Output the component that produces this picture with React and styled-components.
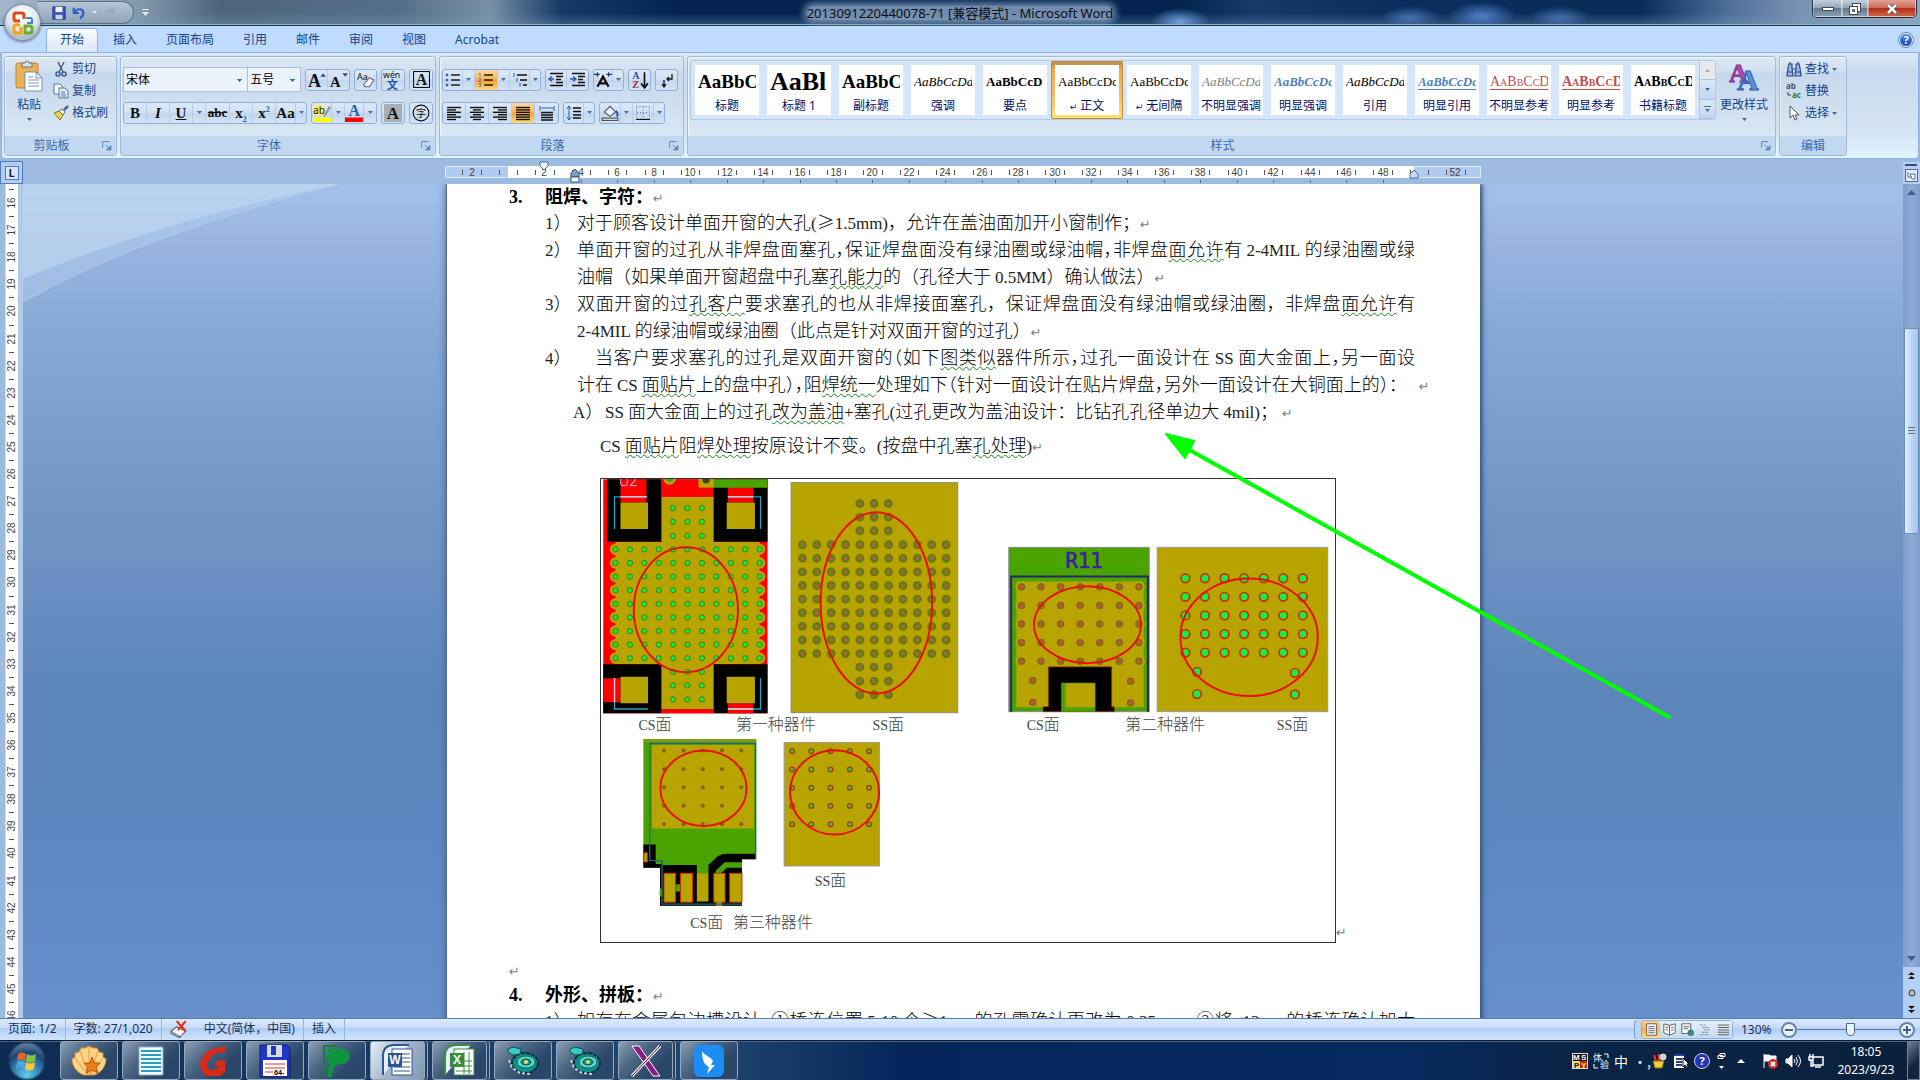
import React from 'react';
import styled, { createGlobalStyle, css } from 'styled-components';

const UI_FONT = `"Noto Sans", "Noto Sans CJK SC", sans-serif`;

const GlobalStyle = createGlobalStyle`
  * { box-sizing: border-box; }
  html, body, #root { height: 100%; }
  body {
    margin: 0;
    overflow: hidden;
    font: 12px/16px ${UI_FONT};
    color: #15428b;
  }
  button, select, input {
    font: inherit;
    color: inherit;
    margin: 0;
    padding: 0;
    border: 0;
    background: none;
  }
  svg { display: block; flex: none; }
`;

const Window = styled.div`
  display: flex;
  flex-direction: column;
  height: 100vh;
  background: #9dbbe2;
`;

/* ---------- title bar ---------- */

const TitleBar = styled.header`
  display: grid;
  grid-template-columns: 1fr auto 1fr;
  height: 26px;
  flex: none;
  border-bottom: 1px solid #1d3b52;
  box-shadow: inset 0 -1px #8fb4c0;
  background:
    radial-gradient(ellipse 30px 14px at 1180px 22px, #6f9fdc, transparent),
    radial-gradient(ellipse 30px 12px at 1410px 18px, #4672ae, transparent),
    radial-gradient(ellipse 34px 14px at 1482px 16px, #4f80c8, transparent),
    radial-gradient(ellipse 30px 12px at 1560px 18px, #4672ae, transparent),
    linear-gradient(transparent 50%, rgba(120, 160, 190, 0.35)),
    linear-gradient(90deg, #a3b6cb 0, #8298ad 140px, #4d647c 220px, #566f88 400px, #7890a5 490px, #163a66 560px, #03234e 680px, #03234e 1180px, #16386a 1250px, #0a2d5c 1400px, #0a2b58 1640px, #4f7099 1730px, #7893b3 1800px, #8fa6bf 100%);
`;

const TitleLeft = styled.div`
  display: flex;
  align-items: center;
  gap: 8px;
`;

const QuickAccess = styled.div`
  display: flex;
  align-items: center;
  gap: 6px;
  width: 96px;
  height: 23px;
  margin-left: 38px;
  padding-left: 14px;
  border: 1px solid #5d7287;
  border-left: 0;
  border-radius: 0 12px 12px 0;
  background: linear-gradient(#b6c5d6, #8ea3b9);
`;

const QuickButton = styled.button`
  display: flex;
  align-items: center;
`;

const OfficeButton = styled.button`
  position: absolute;
  left: 4px;
  top: 4px;
  width: 37px;
  height: 37px;
  border-radius: 50%;
  border: 1px solid #7d90a8;
  background: radial-gradient(circle at 50% 30%, #fff, #dfe6ee 50%, #a9b8ca 75%, #f4f8fc);
  box-shadow: 0 1px 3px rgba(0, 0, 0, 0.5);
  display: grid;
  place-items: center;
`;

const WindowTitle = styled.h1`
  margin: 0;
  align-self: center;
  font: 13px/14px ${UI_FONT};
  color: #0a0f16;
  background: rgba(150, 175, 205, 0.75);
  border-radius: 6px;
  box-shadow: 0 0 7px 3px rgba(150, 175, 205, 0.75);
`;

const WindowButtons = styled.div`
  display: flex;
  justify-self: end;
  height: 18px;
  margin-right: 3px;
  border: 1px solid #1f2f42;
  border-top: 0;
  border-radius: 0 0 5px 5px;
  overflow: hidden;
`;

const WindowButton = styled.button`
  width: ${p => p.$width}px;
  display: grid;
  place-items: center;
  box-shadow: inset -1px -1px rgba(255, 255, 255, 0.55), inset 1px 0 rgba(255, 255, 255, 0.35);
  background: ${p => (p.$close
    ? 'linear-gradient(#e0a397, #cd6a56 45%, #b2301a 50%, #cf6a4c)'
    : 'linear-gradient(#c5d0dc, #93a5b8 45%, #65798f 50%, #8da0b4)')};
`;

/* ---------- ribbon ---------- */

const TabStrip = styled.nav`
  display: flex;
  align-items: flex-end;
  gap: 1px;
  flex: none;
  height: 26px;
  padding: 0 7px 0 46px;
  background: #bfdbff;
`;

const Tab = styled.button`
  height: 24px;
  padding: 0 13px 2px;
  border: 1px solid transparent;
  border-bottom: 0;
  border-radius: 4px 4px 0 0;
  white-space: nowrap;
  ${p => p.$active && css`
    border-color: #8db2e3;
    background: linear-gradient(#fff, #e6eff9 60%, #dbe6f4);
  `}
`;

const HelpButton = styled.button`
  margin: 0 0 5px auto;
  width: 14px;
  height: 14px;
  border-radius: 50%;
  border: 1px solid #fff;
  outline: 1px solid #5b84c4;
  background: linear-gradient(#4e8ee8, #1546b4);
  color: #fff;
  font: bold 11px/12px "Noto Sans", sans-serif;
`;

const RibbonPanel = styled.section`
  display: flex;
  gap: 3px;
  flex: none;
  height: 107px;
  margin: 0 1px;
  padding: 3px 2px 2px;
  border: 1px solid #8db2e3;
  border-radius: 0 0 4px 4px;
  background: linear-gradient(#dbe7f5, #cddef0 16px, #c8daee 17px, #d5e4f4 80px, #e1f5ff);
`;

const Group = styled.section`
  display: flex;
  flex-direction: column;
  width: ${p => p.$width}px;
  flex: none;
  border: 1px solid #9ebbdd;
  border-radius: 3px;
  box-shadow: inset 1px 1px rgba(255, 255, 255, 0.6);
  background: linear-gradient(#dee8f5, #d1dff0 15px, #c7d8ed 16px, #d8e7f3 80px);
`;

const GroupBody = styled.div`
  flex: 1;
  display: flex;
  padding: ${p => p.$pad || '2px 3px'};
  gap: ${p => p.$gap || 0}px;
  flex-direction: ${p => (p.$column ? 'column' : 'row')};
`;

const GroupFooter = styled.footer`
  height: 19px;
  display: flex;
  align-items: center;
  text-align: center;
  color: #3e6aaa;
  background: #c1d8f0;
  border-radius: 0 0 3px 3px;
`;

const GroupTitle = styled.span`
  flex: 1;
`;

const Launcher = styled.button`
  display: flex;
  justify-content: center;
  width: 18px;
`;

const BigButton = styled.button`
  display: flex;
  flex-direction: column;
  align-items: center;
  gap: 5px;
  width: ${p => p.$width}px;
  padding-top: 2px;
  white-space: nowrap;
`;

const SmallColumn = styled.div`
  display: flex;
  flex-direction: column;
`;

const SmallButton = styled.button`
  display: flex;
  align-items: center;
  gap: 3px;
  height: 22px;
  white-space: nowrap;
`;

const ToolRow = styled.div`
  display: flex;
  gap: 4px;
  height: 23px;
  align-items: center;
`;

const Cluster = styled.div`
  display: flex;
  height: 22px;
  border: 1px solid #8fb0dc;
  border-radius: 3px;
  background: linear-gradient(#dde9f7, #cfdff2 50%, #c2d6ee 51%, #d3e3f5);
`;

const Tool = styled.button`
  width: ${p => p.$width || 23}px;
  height: 20px;
  display: flex;
  align-items: center;
  justify-content: center;
  color: #111;
  border-right: 1px solid #b5cdea;
  &:last-child { border-right: 0; }
  ${p => p.$active && css`background: linear-gradient(#fdd8a4, #fbb75c 45%, #fa9f2e 50%, #fedd7c);`}
`;

const Glyph = styled.span`
  font: ${p => p.$weight || 'bold'} ${p => p.$size || 15}px/18px "Liberation Serif", serif;
  color: #111;
  text-decoration: ${p => p.$line || 'none'};
  sup, sub { font-size: 8px; line-height: 0; color: #2a5bbd; }
`;

const Combo = styled.select`
  appearance: none;
  height: 25px;
  width: ${p => p.$width}px;
  padding: 0 2px;
  border: 1px solid #abc1de;
  border-radius: 0;
  color: #000;
  background:
    linear-gradient(#4a6fa5, #4a6fa5) right 5px top 11px / 5px 1px no-repeat,
    linear-gradient(#4a6fa5, #4a6fa5) right 6px top 12px / 3px 1px no-repeat,
    linear-gradient(#4a6fa5, #4a6fa5) right 7px top 13px / 1px 1px no-repeat,
    #eaf2fb;
  & + & { margin-left: -5px; }
`;

const Gallery = styled.div`
  display: flex;
  height: 60px;
  border: 1px solid #b0cbeb;
  border-radius: 3px;
  background: #d4e6f8;
  overflow: hidden;
`;

const StyleTile = styled.button`
  display: flex;
  flex-direction: column;
  width: 72px;
  height: 58px;
  padding: 4px;
  flex: none;
  border-radius: 2px;
  ${p => p.$active && css`
    background: linear-gradient(#b78a4c, #f5a742 15%, #f8bd62 60%, #ffe46e);
    outline: 1px solid #c08a40;
    outline-offset: -1px;
  `}
`;

const TileFace = styled.span`
  display: flex;
  flex-direction: column;
  flex: 1;
  width: 100%;
  padding: 0 3px;
  background: #fff;
  overflow: hidden;
`;

const Preview = styled.span`
  height: 33px;
  text-align: left;
  white-space: nowrap;
  overflow: hidden;
  color: ${p => p.$color || '#000'};
  font: ${p => p.$font} "Liberation Serif", serif;
  line-height: 34px;
  text-decoration: ${p => (p.$line ? 'underline' : 'none')};
  text-underline-offset: 3px;
  font-variant: ${p => (p.$caps ? 'small-caps' : 'normal')};
`;

const TileName = styled.span`
  color: #00106a;
  text-align: center;
  white-space: nowrap;
  margin: 0 -3px;
`;

const TileMark = styled.small`
  font: 9px/12px "DejaVu Sans", sans-serif;
  margin-right: 3px;
`;

const GalleryScroll = styled.div`
  display: flex;
  flex-direction: column;
  width: 16px;
  border-left: 1px solid #a9c3e4;
`;

const ScrollStep = styled.button`
  flex: 1;
  display: grid;
  place-items: center;
  background: ${p => (p.$off ? '#e6e8ea' : 'linear-gradient(#dbe8f7, #c2d6ee)')};
  border-bottom: 1px solid #a9c3e4;
`;

/* ---------- rulers ---------- */

const RulerRow = styled.div`
  display: grid;
  grid-template-columns: 23px 1fr 17px;
  flex: none;
  height: 25px;
  justify-items: center;
  align-items: end;
  background: #9dbbe1;
`;

const TabStop = styled.button`
  width: 23px;
  height: 23px;
  border: 1px solid #4f7bc4;
  background: #b4cdec;
  display: grid;
  place-items: center;
  span {
    width: 14px;
    height: 14px;
    border: 1px solid #4f7bc4;
    background: #d7e6f8;
    font: bold 11px/12px "Noto Sans", sans-serif;
    color: #223;
  }
`;

const WorkArea = styled.main`
  flex: 1;
  min-height: 0;
  display: grid;
  grid-template-columns: 23px 1fr 17px;
`;

const SideRuler = styled.aside`
  overflow: hidden;
  background: linear-gradient(90deg, #9dbbe1 5px, #c9dbf2 5px 6px, #fff 6px 18px, #b2c9e8 18px);
`;

const Canvas = styled.div`
  position: relative;
  overflow: hidden;
  background: linear-gradient(#a1c1ea, #98b5e0 60px, #85a7d4 160px, #7499c8 300px, #6b91c2 390px, #5c85ba 510px, #5d87c0 640px, #668fcc);
`;

const Swoosh = styled.svg`
  position: absolute;
  left: 0;
  top: 0;
`;

const Scrollbar = styled.aside`
  display: flex;
  flex-direction: column;
  align-items: center;
  background: linear-gradient(90deg, #7d9dca, #8eabd4 50%, #7d9dca);
`;

const ScrollButton = styled.button`
  width: 17px;
  height: ${p => p.$height || 17}px;
  display: grid;
  place-items: center;
  background: ${p => (p.$light ? '#b5cff2' : 'none')};
`;

const ScrollTrack = styled.div`
  flex: 1;
  width: 100%;
  padding: 127px 1px 0;
`;

const ScrollThumb = styled.div`
  height: 206px;
  border: 1px solid #6c8dbd;
  border-radius: 2px;
  background: linear-gradient(90deg, #e4effc, #bed5f3 50%, #a9c5ea);
  display: grid;
  place-items: center;
`;

/* ---------- document ---------- */

const Page = styled.article`
  position: relative;
  width: 1034px;
  min-height: 100%;
  margin: 0 auto;
  padding: 0 65px 0 62px;
  background: #fff;
  border-left: 1px solid #55698a;
  box-shadow: 2px 0 4px #3a5580, 0 0 8px #4d6c9c;
  color: #000;
  font: 18px/27px "Noto Sans CJK SC", sans-serif;
  font-weight: 300;
  white-space: nowrap;
`;

const Heading = styled.h2`
  display: flex;
  align-items: baseline;
  height: 24px;
  margin: 0;
  font: bold 18px/22px "Noto Sans CJK SC", sans-serif;
`;

const HeadingNumber = styled.span`
  width: 36px;
  font-family: "Liberation Serif", serif;
`;

const List = styled.ol`
  list-style: none;
  margin: 0;
  padding: 0 0 0 36px;
`;

const Item = styled.li`
  display: grid;
  grid-template-columns: 32px minmax(0, 1fr);
  margin-left: ${p => p.$indent || 0}px;
`;

const Line = styled.div`
  height: 27px;
  padding-left: ${p => p.$indent || 0}px;
  text-align-last: ${p => (p.$full ? 'justify' : 'left')};
  font-feature-settings: ${p => (p.$tight ? '"halt"' : 'normal')};
`;

const Loose = styled.span`
  font-feature-settings: normal;
`;

const Latin = styled.span`
  font: 17px/20px "Liberation Serif", serif;
  color: #222;
  margin: 0 ${p => (p.$gap ? 4 : 0)}px;
`;

const Flag = styled.span`
  text-decoration: underline wavy #178a17 1px;
  text-underline-offset: 2px;
`;

const Closing = styled.p`
  margin: 7px 0 20px;
  padding-left: 91px;
`;

const Mark = styled.span`
  color: #808080;
  font: 13px/20px "DejaVu Sans", sans-serif;
  margin-left: ${p => p.$gap || 0}px;
`;

const Figure = styled.figure`
  display: flex;
  align-items: flex-end;
  margin: 0 -40px 0 91px;
  svg { border: 1px solid #333; }
`;

const EmptyParagraph = styled.p`
  margin: 12px 0 0;
  height: 27px;
`;

const Arrow = styled.svg`
  position: absolute;
  left: 715px;
  top: 246px;
`;

/* ---------- status bar ---------- */

const StatusBar = styled.footer`
  display: flex;
  flex: none;
  height: 22px;
  border-top: 1px solid #567db1;
  background: linear-gradient(#dceafc, #c7dcf8 40%, #b0cdf5 45%, #d2e4fb);
  color: #15305e;
`;

const StatusItem = styled.button`
  display: flex;
  align-items: center;
  gap: ${p => p.$gap || 16}px;
  padding: 0 8px 2px;
  border-right: 1px solid #92b4de;
  white-space: nowrap;
`;

const ViewButtons = styled.div`
  display: flex;
  margin: 1px 8px 1px auto;
  border: 1px solid #8fb0dc;
  border-radius: 3px;
  box-shadow: -6px 0 #bcd4f5, -7px 0 #7b9dca;
`;

const ViewButton = styled.button`
  width: 18px;
  display: grid;
  place-items: center;
  background: ${p => (p.$active ? 'linear-gradient(#fdd08f, #fbb04d 50%, #fee08a)' : 'linear-gradient(#e4effc, #c5daf4)')};
`;

const Zoom = styled.div`
  display: flex;
  align-items: center;
  padding-right: 5px;
  output { width: 40px; }
`;

const RoundButton = styled.button`
  width: 16px;
  height: 16px;
  display: grid;
  place-items: center;
  border: 2px solid #6884ac;
  border-radius: 50%;
  background: #e9f1fb;
`;

const ZoomSlider = styled.input`
  appearance: none;
  width: 102px;
  height: 16px;
  background: linear-gradient(#5f7ea9, #5f7ea9) center / 100% 1px no-repeat;
  &::-webkit-slider-thumb {
    appearance: none;
    width: 9px;
    height: 13px;
    border: 1px solid #4a658f;
    border-radius: 1px 1px 5px 5px;
    background: #eef4fb;
  }
`;

/* ---------- taskbar ---------- */

const Taskbar = styled.footer`
  display: flex;
  flex: none;
  height: 40px;
  gap: 4px;
  padding-left: 8px;
  border-top: 1px solid #0b1a30;
  box-shadow: inset 0 1px #46648c;
  background: linear-gradient(90deg, #0d2b50, #21476f 700px, #06265a 900px, #062a5e 1400px, #0a2547 1560px, #0a203c);
`;

const StartButton = styled.button`
  width: 38px;
  height: 38px;
  margin: 1px 10px 0 0;
  border-radius: 50%;
  display: grid;
  place-items: center;
  background: radial-gradient(circle at 50% 90%, #5fd0f0, #2a6ca4 45%, #1d4573 60%, #8fb3cf);
  box-shadow: inset 0 0 2px 1px #0d2540;
`;

const TaskButton = styled.button`
  width: 58px;
  height: 39px;
  display: grid;
  place-items: center;
  border: 1px solid #93a9c2;
  border-radius: 3px;
  background: ${p => (p.$active
    ? 'linear-gradient(120deg, #e8eef5, #a5b7cc 45%, #8098b5)'
    : 'linear-gradient(135deg, #8c9fb6, #4d6784 35%, #2a4668 70%)')};
  ${p => p.$stack && css`
    width: 55px;
    margin-right: 3px;
    box-shadow: 2px 0 #28415f, 3px 0 #93a9c2;
  `}
`;

const Tray = styled.div`
  display: flex;
  align-items: center;
  gap: 5px;
  margin-left: auto;
  color: #fff;
  button { display: flex; }
`;

const ImeButton = styled.button`
  width: ${p => p.$width}px;
  margin-right: ${p => p.$after || 0}px;
  justify-content: center;
  font: 14px/16px "Noto Sans CJK SC", sans-serif;
`;

const HelpTray = styled.button`
  width: 16px;
  height: 16px;
  justify-content: center;
  border: 1px solid #c9d4f2;
  border-radius: 50%;
  background: #2036b4;
  color: #fff;
  font: bold 11px/14px "Noto Sans", sans-serif;
`;

const ExpandTray = styled.button`
  margin-right: 8px;
`;

const Clock = styled.time`
  width: 72px;
  text-align: center;
  font: 12px/18px ${UI_FONT};
`;

const ShowDesktop = styled.button`
  width: 13px;
  height: 39px;
  border: 1px solid #6a7f9a;
  background: linear-gradient(135deg, #6b7f98, #14243c 60%);
`;

/* ---------- icons ---------- */

const Caret = ({ color = '#4a6a9a' }) => (
  <svg width="5" height="3"><path d="M0 0h5L2.5 3z" fill={color} /></svg>
);

const CaretTool = () => <Tool $width={13}><Caret /></Tool>;

const Svg = ({ s = 16, children, ...rest }) => (
  <svg width={s} height={s} viewBox="0 0 16 16" fill="none" stroke="#111" {...rest}>{children}</svg>
);

const SizeIcon = ({ size, down }) => (
  <Svg s={18} stroke="none">
    <text x="0" y="14" fontSize={size} fontWeight="bold" fill="#111" fontFamily="Liberation Serif">A</text>
    <path d={down ? 'M11 2h5l-2.500 3z' : 'M11 5h5l-2.500-3z'} fill="#2a4f9a" />
  </Svg>
);

const Bars = ({ widths, align = 0, x = 1 }) => (
  <Svg>
    {widths.map((w, i) => (
      <path key={i} d={`M${x + (14 - w) * align} ${2.5 + i * 2.4}h${w}`} strokeWidth="1.4" />
    ))}
  </Svg>
);

const BulletIcon = ({ numbered }) => (
  <Svg>
    {[3, 8, 13].map((y, i) => (
      <g key={y}>
        <path d={`M6 ${y}h9`} strokeWidth="1.4" />
        {numbered
          ? <text x="0" y={y + 2} fontSize="6" fill="#234f9e" stroke="none" fontFamily="Noto Sans">{i + 1}</text>
          : <circle cx="2" cy={y} r="1" fill="#2a5bbd" stroke="#2a5bbd" />}
      </g>
    ))}
  </Svg>
);

const LevelsIcon = () => (
  <Svg>
    <path d="M5 3h10M8 8h7M11 13h4" strokeWidth="1.4" />
    <path d="M2 1v4M5 6v4M8 11v4" stroke="#2a5bbd" />
  </Svg>
);

const IndentIcon = ({ right }) => (
  <Svg>
    <path d="M2 1.500h13M8 4.500h7M8 7.500h5M8 10.500h7M2 13.500h13" strokeWidth="1.500" />
    <path d={right ? 'M0 7h5M3 4.500l3 2.500-3 2.500' : 'M1 7h5M4 4.500L1 7l3 2.500'} stroke="#2a5bbd" strokeWidth="1.500" />
  </Svg>
);

const LauncherIcon = () => (
  <Svg s={10} stroke="#5f84b8" strokeWidth="1.600">
    <path d="M1 11V1h11M6 6l6 6M14 7v7H7" />
    <path d="M14 14l-6 0 6-6z" fill="#5f84b8" />
  </Svg>
);

const SaveIcon = () => (
  <Svg s={14} stroke="#1d2e86">
    <rect x="1" y="1" width="14" height="14" fill="#3b50bd" />
    <rect x="4" y="1" width="8" height="6" fill="#eef2fa" stroke="none" />
    <rect x="4" y="10" width="8" height="5" fill="#cbd5ee" stroke="none" />
  </Svg>
);

const UndoIcon = () => (
  <Svg s={14} stroke="#2d5fc4" strokeWidth="2.500">
    <path d="M2 2v6h6M3 7c3-5 10-4 10 1 0 3-2 5-4 6" />
  </Svg>
);

const RedoIcon = () => (
  <Svg s={14} stroke="#98a9bb" strokeWidth="2">
    <path d="M12 2v5H7M11 5C7 3 3 6 3 10s6 6 9 2" />
  </Svg>
);

const CustomizeIcon = () => (
  <svg width="7" height="7"><path d="M0 0h7v1H0zM0 3h7L3.500 7z" fill="#e4ebf3" /></svg>
);

const OfficeLogo = () => (
  <svg width="24" height="26" viewBox="0 0 24 26" fill="none" strokeWidth="3">
    <path d="M9 11H5a2 2 0 0 1-2-2V5a2 2 0 0 1 2-2h6a2 2 0 0 1 2 2v4" stroke="#dc4a12" />
    <path d="M15 8h4a2 2 0 0 1 2 2v3h-5" stroke="#3f86d2" strokeWidth="2" />
    <path d="M9 15H5a2 2 0 0 0-2 2v4a2 2 0 0 0 2 2h5v-6" stroke="#f5a50c" />
    <path d="M14 23h5a2 2 0 0 0 2-2v-3a2 2 0 0 0-2-2h-5z" stroke="#6fae2c" />
  </svg>
);

const PasteIcon = () => (
  <svg width="28" height="32" viewBox="0 0 28 32">
    <rect x="1" y="3" width="22" height="25" rx="2" fill="#e9b254" stroke="#b98530" />
    <path d="M7 5V3h3a2 2 0 0 1 4 0h3v4H7z" fill="#d9dde4" stroke="#6a7484" />
    <path d="M10 12h11l6 6v13H10z" fill="#fff" stroke="#6d8dbb" />
    <path d="M21 12v6h6M13 17h5M13 20h11M13 23h11M13 26h11" fill="none" stroke="#7b98c4" />
  </svg>
);

const CutIcon = () => (
  <Svg stroke="#3a5f9f">
    <path d="M5 1l5 10M11 1L6 11" stroke="#55657c" strokeWidth="1.600" />
    <circle cx="5" cy="13" r="2" strokeWidth="1.600" />
    <circle cx="11" cy="13" r="2" strokeWidth="1.600" />
  </Svg>
);

const CopyIcon = () => (
  <Svg stroke="#4a72ad">
    <path d="M1 1h6l3 3v7H1z" fill="#fff" />
    <path d="M6 5h6l3 3v7H6z" fill="#e8f0fb" />
    <path d="M8 9h4M8 11h5M8 13h5" />
  </Svg>
);

const BrushIcon = () => (
  <Svg stroke="#8b7420">
    <path d="M1 8l5-2 4 4-3 5z" fill="#f0d348" />
    <path d="M6 6l3-2 3 3-2 3z" fill="#fff" stroke="#666" />
    <path d="M11 5l4-4" stroke="#49639a" strokeWidth="2.500" />
  </Svg>
);

const FindIcon = () => (
  <Svg stroke="#244a86" strokeWidth="1.200">
    <path d="M3 3h3v4l1 8H1l1-8zM10 3h3l1 4 1 8H9l1-8z" fill="#9cb9e4" />
    <path d="M4 1v2M12 1v2M6 8h4M1 11h6M9 11h6" />
  </Svg>
);

const ReplaceIcon = () => (
  <Svg stroke="none" fontSize="8" fontWeight="bold" fontFamily="Noto Sans">
    <text x="0" y="6" fill="#555">ab</text>
    <text x="6" y="15" fill="#2b7b3c">ac</text>
    <path d="M2 9v3h3" fill="none" stroke="#333" />
  </Svg>
);

const SelectIcon = () => (
  <Svg stroke="#555"><path d="M4 1v12l3-3 2 5 2-1-2-4h4z" fill="#fff" /></Svg>
);

const ChangeStylesIcon = () => (
  <svg width="30" height="30" viewBox="0 0 30 30" fontFamily="Liberation Serif" fontWeight="bold">
    <text x="0" y="20" fontSize="26" fill="#b34fb5" stroke="#83318a">A</text>
    <text x="8" y="28" fontSize="30" fill="#5b93de" stroke="#2f62ae">A</text>
  </svg>
);

/* ---------- rulers drawings ---------- */

const UNIT = 18.22;

const TopRuler = () => {
  const labels = [-2, ...Array.from({ length: 24 }, (_, i) => i * 2 + 2), 52];
  const at = n => 63 + n * UNIT;
  const halves = [-2.5, -1.5, -0.5, 0.5, 50.5, 51.5, 52.5];
  for (let n = 1.5; n < 50; n += 1) halves.push(n);
  return (
    <svg width="1036" height="24" fontFamily="Liberation Sans" fontSize="10" textAnchor="middle" fill="#444">
      <rect x="0.500" y="6.500" width="1035" height="11" fill="#b0cbef" stroke="#dce9f8" />
      <rect x="63" y="6" width="906" height="12" fill="#fff" />
      {halves.map(n => <path key={n} d={`M${Math.round(at(n)) + 0.5} 10v5`} stroke="#555" />)}
      {labels.map(n => (
        <g key={n}>
          <text x={Math.round(at(n))} y="16">{Math.abs(n)}</text>
          {n > 3 && n < 50 && <path d={`M${Math.round(at(n)) + 0.5} 20v3`} stroke="#5a7398" />}
        </g>
      ))}
      <path d="M95 2h8v4l-4 4-4-4z" fill="#e8f0fa" stroke="#4e6c98" />
      <path d="M126 17v-4l4-4 4 4v4z" fill="#7f9fc8" stroke="#35577f" />
      <rect x="126" y="17" width="8" height="5" fill="#fff" stroke="#35577f" />
      <path d="M965 18v-4l4-4 4 4v4z" fill="#c8dbf2" stroke="#4e6c98" />
    </svg>
  );
};

const LeftRuler = () => (
  <svg width="23" height="100%" fontFamily="Liberation Sans" fontSize="10" textAnchor="middle" fill="#444">
    {Array.from({ length: 60 }, (_, i) => {
      const y = Math.round(19 + i * 27.1);
      return (
        <g key={i}>
          <text transform={`translate(15 ${y}) rotate(-90)`}>{16 + i}</text>
          <path d={`M9 ${y - 13.5}h5`} stroke="#555" />
        </g>
      );
    })}
  </svg>
);

/* ---------- board drawings, in units of a third of a pixel ---------- */

const GOLD = '#b8a400';
const GREEN = '#4aa400';
const RED = '#e81000';

const grid = (cols, rows) => rows.flatMap(y => cols.map(x => [x, y]));
const steps = (start, step, count) => Array.from({ length: count }, (_, i) => start + step * i);

const Dots = ({ points, r, ...rest }) => (
  <g {...rest}>{points.map(([x, y]) => <circle key={`${x}-${y}`} cx={x} cy={y} r={r} />)}</g>
);

const Ring = ({ cx, cy, rx, ry }) => (
  <ellipse cx={cx} cy={cy} rx={rx} ry={ry} fill="none" stroke={RED} strokeWidth="6" />
);

const FirstDevice = () => {
  const rows = steps(236, 41, 9);
  const cs = [
    ...grid(steps(75, 43.4, 11), rows),
    ...grid([248, 291.5, 335], [112, 153, 195, 605, 646, 688]),
  ];
  const ss = [
    ...grid(steps(638, 43.3, 11), steps(222, 41, 9)),
    ...grid([811, 854, 897], [98, 139, 180, 591, 633, 674]),
  ];
  return (
    <g transform="translate(-11 -8) scale(.33333)">
      <rect x="38" y="25" width="495" height="705" fill="#f00" />
      <path d="M213 78h158v639H213zM75 213h434v369H75z" fill={GOLD} />
      <Dots points={grid([75, 509], rows)} r={17} fill={GOLD} />
      <path d="M50 25h163v188H50zM371 25h162v188H371zM38 582h175v148H38zM371 582h162v148H371z" fill="#000" />
      <path d="M90 25h78v70H90zM414 25h76v70h-76zM38 624h52v73H38zM414 700h76v30h-76z" fill="#f00" />
      <path d="M213 25h112v53H213z" fill="#f00" />
      <path d="M325 25h47v25h-47z" fill={GOLD} />
      <path d="M372 25h161v25H372z" fill={GREEN} />
      <circle cx="348" cy="26" r="11" fill="#453d24" />
      <circle cx="238" cy="22" r="15" fill="#3ca51d" stroke={GOLD} strokeWidth="8" />
      <path d="M90 95h83v80H90zM410 95h85v80h-85zM90 620h83v80H90zM410 620h85v80h-85z" fill={GOLD} />
      <path d="M72 175V78h100M412 78h100v97M72 624v93h101M412 717h100v-93" fill="none" stroke="#26a0bb" strokeWidth="4" />
      <path d="M90 78h78M414 78h76M72 624v72M414 717h76" stroke="#f5cfe5" strokeWidth="4" />
      <path d="M213 717h158v13H213z" fill="#f00" />
      <text x="85" y="45" fontSize="44" fontFamily="Noto Sans" fill="#ecc2ec">U2</text>
      <Dots points={cs} r={8} fill="#17e640" stroke="#4e7a00" strokeWidth="3" />
      <Ring cx={287} cy={418} rx={157} ry={188} />
      <rect x="604" y="35" width="502" height="693" fill={GOLD} stroke="#8a8a70" strokeWidth="3" />
      <Dots points={ss} r={10} fill="#a7643d" stroke="#647d10" strokeWidth="7" />
      <Ring cx={861} cy={397} rx={168} ry={273} />
    </g>
  );
};

const SecondDevice = () => {
  const rows = [169, 225, 281, 337, 393];
  const cs = [...grid(steps(95, 59, 7), rows), [129, 451], [424, 453], [129, 517], [424, 519]];
  const ss = [...grid(steps(589, 59, 7), [143, 199, 255, 311, 367]), [624, 425], [919, 428], [624, 492], [919, 493]];
  return (
    <g transform="translate(390 52) scale(.33333)">
      <rect x="57" y="50" width="423" height="495" fill={GREEN} stroke="#888" strokeWidth="3" />
      <text x="228" y="112" fontSize="62" fontFamily="DejaVu Sans Mono" fill="#3b1fa0" stroke="#3b1fa0" strokeWidth="2">R11</text>
      <path d="M64 545V138h412v407" fill="none" stroke="#2b2570" strokeWidth="6" />
      <path d="M80 153h383v379H80z" fill={GOLD} />
      <Dots points={grid([95, 449], rows)} r={18} fill={GOLD} />
      <path d="M176 410h191v120h8v15H160v-15h16z" fill="#000" stroke="#b33c00" strokeWidth="2" />
      <path d="M215 458h103v87H215z" fill={GREEN} />
      <path d="M228 460h88v72h-88z" fill={GOLD} />
      <Dots points={cs} r={10} fill="#ab5f30" stroke="#73680f" strokeWidth="3" />
      <Ring cx={294} cy={283} rx={161} ry={116} />
      <rect x="504" y="50" width="514" height="495" fill={GOLD} stroke="#999" strokeWidth="3" />
      <Dots points={ss} r={13} fill="#12f045" stroke="#d12c00" strokeWidth="5" />
      <Ring cx={781} cy={321} rx={207} ry={177} />
    </g>
  );
};

const ThirdDevice = () => {
  const rows = [92, 148, 203, 258, 314];
  const cs = grid([221, 280, 338, 396, 454], rows).filter(([x, y]) => !(x === 454 && y === 258));
  return (
    <g transform="translate(-11 242) scale(.33333)">
      <path d="M159 58h340v362h-43v140H209V445h-50z" fill={GREEN} />
      <path d="M159 58h340v9H159z" fill="#809a10" />
      <path d="M185 75h307v252H185z" fill={GOLD} />
      <path d="M159 375h37v52h20v10h105v25h34v-25l28-26q10-8 24-8h90v17h-41v140H209V445h-50z" fill="#000" />
      <path d="M320 437h34v26h-34z" fill={GREEN} />
      <path d="M385 466v-8l22-21h49" fill="none" stroke={GREEN} strokeWidth="16" />
      <path d="M212 508v24M196 430h18" stroke={GREEN} strokeWidth="8" />
      <path d="M256 506h15" stroke={GREEN} strokeWidth="22" />
      <path d="M160 400h11v28h-11zM221 462h35v87h-35zM271 462h36v87h-36zM371 462h34v87h-34zM419 462h37v87h-37z" fill={GOLD} stroke="#d22c00" strokeWidth="3" />
      <path d="M320 462h35v85h-35zM378 549h18v11h-18z" fill={GOLD} />
      <path d="M497 420V71H178v353h37v131h241" fill="none" stroke="#1f6680" strokeWidth="4" />
      <Dots points={cs} r={5} fill="#8c5a28" stroke="#77700c" strokeWidth="3" />
      <Ring cx={340} cy={206} rx={130} ry={114} />
      <rect x="583" y="68" width="287" height="372" fill={GOLD} stroke="#999" strokeWidth="3" />
      <Dots points={grid(steps(607, 58, 5), [94, 149, 204, 259, 314])} r={7} fill="#37c94b" stroke="#a83a10" strokeWidth="4" />
      <Ring cx={735} cy={218} rx={134} ry={127} />
    </g>
  );
};

const CAPTIONS = [
  [37, 252, 'CS', '面'], [135, 252, '', '第一种器件'], [272, 252, 'SS', '面'],
  [427, 252, 'CS', '面'], [526, 252, '', '第二种器件'], [678, 252, 'SS', '面'],
  [214, 409, 'SS', '面'], [89, 451, 'CS', '面'], [132, 451, '', '第三种器件'],
];

const Boards = () => (
  <svg width="736" height="465" viewBox="0 0 736 465">
    <FirstDevice />
    <SecondDevice />
    <ThirdDevice />
    <g fontFamily='"Noto Sans CJK SC"' fontWeight="300" fontSize="16" fill="#444">
      {CAPTIONS.map(([x, y, side, text]) => (
        <text key={`${x}-${y}`} x={x} y={y}>
          <tspan fontFamily="Liberation Serif" fontSize="14">{side}</tspan>{text}
        </text>
      ))}
    </g>
  </svg>
);

/* ---------- sections ---------- */

const RibbonGroup = ({ title, launcher = true, children, ...rest }) => (
  <Group {...rest}>
    {children}
    <GroupFooter>
      <GroupTitle>{title}</GroupTitle>
      {launcher && <Launcher aria-label={`${title}选项`}><LauncherIcon /></Launcher>}
    </GroupFooter>
  </Group>
);

const STYLES = [
  { name: '标题', text: 'AaBbC', font: 'bold 19px' },
  { name: '标题 1', text: 'AaBl', font: 'bold 26px' },
  { name: '副标题', text: 'AaBbC', font: 'bold 19px' },
  { name: '强调', text: 'AaBbCcDd', font: 'italic 13px' },
  { name: '要点', text: 'AaBbCcD', font: 'bold 13px' },
  { name: '正文', text: 'AaBbCcDd', font: '13px', active: true, mark: true },
  { name: '无间隔', text: 'AaBbCcDd', font: '13px', mark: true },
  { name: '不明显强调', text: 'AaBbCcDd', font: 'italic 13px', color: '#808080' },
  { name: '明显强调', text: 'AaBbCcDd', font: 'italic bold 13px', color: '#4f81bd' },
  { name: '引用', text: 'AaBbCcDd', font: 'italic 13px' },
  { name: '明显引用', text: 'AaBbCcDd', font: 'italic bold 13px', color: '#4f81bd', line: true },
  { name: '不明显参考', text: 'AaBbCcDd', font: '14px', color: '#c0504d', line: true, caps: true },
  { name: '明显参考', text: 'AaBbCcDd', font: 'bold 14px', color: '#c0504d', line: true, caps: true },
  { name: '书籍标题', text: 'AaBbCcDd', font: 'bold 14px', caps: true },
];

const FontGroup = () => (
  <RibbonGroup title="字体" $width={316}>
    <GroupBody $column $gap={10} $pad="11px 2px 0">
      <ToolRow>
        <Combo $width={126} aria-label="字体"><option>宋体</option></Combo>
        <Combo $width={54} aria-label="字号"><option>五号</option></Combo>
        <Cluster>
          <Tool $width={22}><SizeIcon size={16} /></Tool>
          <Tool $width={21}><SizeIcon size={13} down /></Tool>
        </Cluster>
        <Cluster>
          <Tool $width={21}>
            <Svg s={18}>
              <text x="0" y="8" fontSize="8" stroke="none" fill="#111" fontFamily="Noto Sans">Aa</text>
              <path d="M6 12l5-6 4 2-4 6H7z" fill="#fff" stroke="#667" />
            </Svg>
          </Tool>
        </Cluster>
        <Cluster>
          <Tool $width={22}>
            <Svg s={20} stroke="none">
              <text x="0" y="6" fontSize="7" fill="#111" fontFamily="Noto Sans">wén</text>
              <text x="3" y="15" fontSize="9" fontWeight="bold" fill="#2a4fa8" fontFamily="Noto Sans CJK SC">文</text>
            </Svg>
          </Tool>
        </Cluster>
        <Cluster>
          <Tool $width={22}>
            <Svg s={17}>
              <rect x="0.500" y="0.500" width="15" height="15" />
              <text x="2.500" y="13" fontSize="15" fontWeight="bold" stroke="none" fill="#111" fontFamily="Liberation Serif">A</text>
            </Svg>
          </Tool>
        </Cluster>
      </ToolRow>
      <ToolRow>
        <Cluster>
          <Tool><Glyph>B</Glyph></Tool>
          <Tool><Glyph $weight="italic bold">I</Glyph></Tool>
          <Tool><Glyph $line="underline">U</Glyph></Tool>
          <CaretTool />
          <Tool $width={24}><Glyph $size={13} $line="line-through">abc</Glyph></Tool>
          <Tool><Glyph>x<sub>2</sub></Glyph></Tool>
          <Tool><Glyph>x<sup>2</sup></Glyph></Tool>
          <Tool $width={20}><Glyph $size={15}>Aa</Glyph></Tool>
          <Tool $width={10}><Caret /></Tool>
        </Cluster>
        <Cluster>
          <Tool $width={20}>
            <Svg s={18} stroke="none">
              <rect x="0" y="12" width="16" height="4" fill="#ff0" />
              <rect x="0" y="1" width="9" height="9" fill="#fff36b" />
              <text x="0" y="9" fontSize="9" fill="#111" fontFamily="Noto Sans">ab</text>
              <path d="M9 11l5-9 2 1-5 8z" fill="#8c98aa" />
            </Svg>
          </Tool>
          <CaretTool />
          <Tool $width={19}>
            <Svg s={18} stroke="none">
              <rect x="0" y="12" width="16" height="4" fill="#f00" />
              <text x="3" y="11" fontSize="14" fontWeight="bold" fill="#2f5fa8" fontFamily="Liberation Serif">A</text>
            </Svg>
          </Tool>
          <Tool $width={12}><Caret /></Tool>
        </Cluster>
        <Cluster>
          <Tool $width={22}>
            <Svg s={18} stroke="none">
              <rect width="16" height="16" fill="#a9adb3" />
              <text x="2.500" y="13" fontSize="15" fontWeight="bold" fill="#111" fontFamily="Liberation Serif">A</text>
            </Svg>
          </Tool>
        </Cluster>
        <Cluster>
          <Tool $width={22}>
            <Svg s={18}>
              <circle cx="8" cy="8" r="7" />
              <text x="3.500" y="11.500" fontSize="9" stroke="none" fill="#111" fontFamily="Noto Sans CJK SC">字</text>
            </Svg>
          </Tool>
        </Cluster>
      </ToolRow>
    </GroupBody>
  </RibbonGroup>
);

const ParagraphGroup = () => (
  <RibbonGroup title="段落" $width={245}>
    <GroupBody $column $gap={10} $pad="11px 2px 0">
      <ToolRow>
        <Cluster>
          <Tool $width={20}><BulletIcon /></Tool>
          <Tool $width={12}><Caret /></Tool>
          <Tool $active><BulletIcon numbered /></Tool>
          <Tool $width={12}><Caret /></Tool>
          <Tool $width={20}><LevelsIcon /></Tool>
          <Tool $width={10}><Caret /></Tool>
        </Cluster>
        <Cluster>
          <Tool $width={21}><IndentIcon /></Tool>
          <Tool $width={21}><IndentIcon right /></Tool>
        </Cluster>
        <Cluster>
          <Tool $width={19}>
            <Svg s={18}><path d="M3 14L8 5l5 9M5 11h6" strokeWidth="2" /><path d="M0 3h5M11 3h5M3 1v4M13 1v4" stroke="#1d2f6f" /></Svg>
          </Tool>
          <Tool $width={10}><Caret /></Tool>
        </Cluster>
        <Cluster>
          <Tool $width={21}>
            <Svg s={18}>
              <g stroke="none" fontSize="9" fontWeight="bold" fontFamily="Liberation Serif">
                <text x="1" y="7" fill="#2a4fa8">A</text>
                <text x="1" y="15" fill="#b02a3a">Z</text>
              </g>
              <path d="M12 1v13M9 11l3 4 3-4" strokeWidth="1.500" />
            </Svg>
          </Tool>
        </Cluster>
        <Cluster>
          <Tool $width={21}>
            <Svg><path d="M13 2v5H8M10 5L8 7l2 2M5 8v7M3 12l2 3 2-3" strokeWidth="1.300" /></Svg>
          </Tool>
        </Cluster>
      </ToolRow>
      <ToolRow>
        <Cluster>
          <Tool><Bars widths={[14, 9, 14, 9, 14, 9]} /></Tool>
          <Tool><Bars widths={[14, 8, 14, 8, 14, 8]} align={0.5} /></Tool>
          <Tool><Bars widths={[14, 9, 14, 9, 14, 9]} align={1} /></Tool>
          <Tool $active><Bars widths={[14, 14, 14, 14, 14, 14]} /></Tool>
          <Tool>
            <Svg><path d="M1 1v5M15 1v5M2 3h12" stroke="#2a5bbd" /><path d="M2 7.500h12M2 10h12M2 12.500h12M2 15h12" strokeWidth="1.300" /></Svg>
          </Tool>
        </Cluster>
        <Cluster>
          <Tool $width={20}>
            <Svg><path d="M7 3h8M7 6.500h8M7 10h8M7 13h8" strokeWidth="1.300" /><path d="M3 1v14M1 4l2-3 2 3M1 12l2 3 2-3" stroke="#2a5bbd" /></Svg>
          </Tool>
          <Tool $width={10}><Caret /></Tool>
        </Cluster>
        <Cluster>
          <Tool $width={21}>
            <Svg s={18} stroke="#555"><path d="M3 7l5-5 5 5-5 4z" fill="#eef" /><path d="M13 6c2 2 2 4 1 5" stroke="#2a5bbd" strokeWidth="2" /><path d="M1 12.500h14v2H1z" fill="#fff" /></Svg>
          </Tool>
          <Tool $width={12}><Caret /></Tool>
          <Tool $width={21}>
            <Svg stroke="#5a6c88" strokeDasharray="1 2"><path d="M1.500 1.500h13v12h-13zM8 2v12M2 7.500h12" /><path d="M1 14.500h14" stroke="#111" strokeDasharray="none" /></Svg>
          </Tool>
          <Tool $width={10}><Caret /></Tool>
        </Cluster>
      </ToolRow>
    </GroupBody>
  </RibbonGroup>
);

const Ribbon = () => (
  <RibbonPanel>
    <RibbonGroup title="剪贴板" $width={113}>
      <GroupBody $pad="1px 3px 0" $gap={3}>
        <BigButton $width={42}><PasteIcon />粘贴<Caret /></BigButton>
        <SmallColumn>
          <SmallButton><CutIcon />剪切</SmallButton>
          <SmallButton><CopyIcon />复制</SmallButton>
          <SmallButton><BrushIcon />格式刷</SmallButton>
        </SmallColumn>
      </GroupBody>
    </RibbonGroup>
    <FontGroup />
    <ParagraphGroup />
    <RibbonGroup title="样式" $width={1089}>
      <GroupBody $pad="3px 2px 0" $gap={2}>
        <Gallery>
          {STYLES.map(s => (
            <StyleTile key={s.name} $active={s.active}>
              <TileFace>
                <Preview $font={s.font} $color={s.color} $line={s.line} $caps={s.caps}>{s.text}</Preview>
                <TileName>{s.mark && <TileMark>↵</TileMark>}{s.name}</TileName>
              </TileFace>
            </StyleTile>
          ))}
          <GalleryScroll>
            <ScrollStep $off aria-label="上一行"><svg width="5" height="3"><path d="M0 3h5L2.500 0z" fill="#aaa" /></svg></ScrollStep>
            <ScrollStep aria-label="下一行"><Caret /></ScrollStep>
            <ScrollStep aria-label="其他"><svg width="7" height="6"><path d="M0 0h7v1H0zM1 3h5L3.500 6z" fill="#4a6a9a" /></svg></ScrollStep>
          </GalleryScroll>
        </Gallery>
        <BigButton $width={52}><ChangeStylesIcon />更改样式<Caret /></BigButton>
      </GroupBody>
    </RibbonGroup>
    <RibbonGroup title="编辑" launcher={false} $width={68}>
      <GroupBody $pad="1px 6px 0" $column>
        <SmallButton><FindIcon />查找<Caret /></SmallButton>
        <SmallButton><ReplaceIcon />替换</SmallButton>
        <SmallButton><SelectIcon />选择<Caret /></SmallButton>
      </GroupBody>
    </RibbonGroup>
  </RibbonPanel>
);

const Document = () => (
  <Page>
    <Heading><HeadingNumber>3.</HeadingNumber>阻焊、字符：<Mark>↵</Mark></Heading>
    <List>
      <Item>
        <span><Latin>1</Latin>）</span>
        <Line>对于顾客设计单面开窗的大孔<Latin>(</Latin>≥<Latin>1.5mm)</Latin>，允许在盖油面加开小窗制作；<Mark>↵</Mark></Line>
      </Item>
      <Item>
        <span><Latin>2</Latin>）</span>
        <div>
          <Line $full $tight>单面开窗的过孔从非焊盘面塞孔，保证焊盘面没有绿油圈或绿油帽，非焊盘<Flag>面允许</Flag>有<Latin $gap>2-4MIL</Latin>的绿油圈或绿</Line>
          <Line>油帽（如果单面开窗超盘中孔塞<Flag>孔能力</Flag>的（孔径大于 <Latin>0.5MM</Latin>）确认做法）<Mark>↵</Mark></Line>
        </div>
      </Item>
      <Item>
        <span><Latin>3</Latin>）</span>
        <div>
          <Line $full>双面开窗的过<Flag>孔客户</Flag>要求塞孔的也从非焊接面塞孔，保证焊盘面没有绿油帽或绿油圈，非焊盘<Flag>面允许</Flag>有</Line>
          <Line><Latin>2-4MIL</Latin> 的绿油帽或绿油圈（此点是针对双面开窗的过孔）<Mark>↵</Mark></Line>
        </div>
      </Item>
      <Item>
        <span><Latin>4</Latin>）</span>
        <div>
          <Line $full $tight $indent={18}>当客户要求塞孔的过孔是双面开窗的（如下<Flag>图类似</Flag>器件所示，过孔一面设计在<Latin $gap>SS</Latin>面大金面上，另一面设</Line>
          <Line $tight>计在<Latin $gap>CS</Latin><Flag>面贴片</Flag>上的盘中孔），阻<Flag>焊统一</Flag>处理如下（针对一面设计在贴片焊盘，另外一面设计在大铜面上的）<Loose>：</Loose><Mark $gap={12}>↵</Mark></Line>
        </div>
      </Item>
      <Item $indent={28}>
        <span><Latin>A</Latin>）</span>
        <Line><Latin>SS</Latin> 面大金面上的过孔<Flag>改为盖油</Flag><Latin>+</Latin>塞孔<Latin>(</Latin>过孔更改为盖油设计：比钻孔孔径单边大 <Latin>4mil)</Latin>；<Mark $gap={4}>↵</Mark></Line>
      </Item>
    </List>
    <Closing>
      <Latin>CS</Latin> <Flag>面贴片</Flag>阻<Flag>焊处理</Flag>按原设计不变。<Latin>(</Latin>按盘中孔塞<Flag>孔处理</Flag><Latin>)</Latin><Mark>↵</Mark>
    </Closing>
    <Figure><Boards /><Mark>↵</Mark></Figure>
    <EmptyParagraph><Mark>↵</Mark></EmptyParagraph>
    <Heading><HeadingNumber>4.</HeadingNumber>外形、拼板：<Mark>↵</Mark></Heading>
    <List>
      <Item>
        <span><Latin>1</Latin>）</span>
        <Line $full $tight>如存在金属包边槽设计，①桥连位置<Latin $gap>5-10</Latin>个≥<Latin>1mm</Latin>的孔需确认更改为<Latin $gap>0.25mm</Latin>，②将<Latin>≤13mm</Latin>的桥连确认加大</Line>
      </Item>
    </List>
    <Arrow width="512" height="292" fill="#0f0" stroke="#0f0">
      <path d="M24 18L507 287" strokeWidth="4" strokeLinecap="round" />
      <path d="M4 4l28 7-3 6-6 11z" strokeWidth="2" strokeLinejoin="round" />
    </Arrow>
  </Page>
);

const Status = () => (
  <StatusBar>
    <StatusItem>页面: 1/2</StatusItem>
    <StatusItem>字数: 27/1,020</StatusItem>
    <StatusItem>
      <Svg s={18} stroke="#666">
        <path d="M1 10l5-4 8 4-5 5z" fill="#fff" />
        <path d="M1 10v2l8 4v-2" fill="#8fa7c7" />
        <path d="M6 1l8 9M14 1L7 9" stroke="#d9331d" strokeWidth="2" />
      </Svg>
      中文(简体，中国)
    </StatusItem>
    <StatusItem>插入</StatusItem>
    <ViewButtons>
      <ViewButton $active aria-label="页面视图"><Svg s={13} stroke="#444"><path d="M2 1h12v14H2zM4 4.500h8M4 7h8M4 9.500h8M4 12h8" fill="#fff" /></Svg></ViewButton>
      <ViewButton aria-label="阅读版式"><Svg s={13} stroke="#444"><path d="M8 3L1 1v11l7 3 7-3V1zM8 3v12M3 5l3 1M3 8l3 1M10 6l3-1M10 9l3-1" fill="#fff" /></Svg></ViewButton>
      <ViewButton aria-label="Web版式"><Svg s={13} stroke="#444"><path d="M1 1h11v12H1zM3 4.500h7M3 7h6" fill="#fff" /><circle cx="12" cy="12" r="3.500" fill="#3b8f6b" stroke="#2a5fa5" /></Svg></ViewButton>
      <ViewButton aria-label="大纲"><Svg s={13} stroke="#777"><path d="M1 2.500h8M4 5.500h9M6 8.500h8M4 11.500h8M1 14.500h11" strokeDasharray="3 1" /></Svg></ViewButton>
      <ViewButton aria-label="草稿"><Svg s={13} stroke="#666"><path d="M1 2.500h14M1 5.500h14M1 8.500h14M1 11.500h14M1 14.500h14" strokeWidth="1.300" /></Svg></ViewButton>
    </ViewButtons>
    <Zoom>
      <output>130%</output>
      <RoundButton aria-label="缩小"><svg width="8" height="8"><path d="M0 3h8v2H0z" fill="#445f88" /></svg></RoundButton>
      <ZoomSlider type="range" min="10" max="230" defaultValue="126" aria-label="显示比例" />
      <RoundButton aria-label="放大"><svg width="8" height="8"><path d="M0 3h8v2H0zM3 0h2v8H3z" fill="#445f88" /></svg></RoundButton>
    </Zoom>
  </StatusBar>
);

const ShellIcon = () => (
  <svg width="36" height="32" viewBox="0 0 36 32">
    <path d="M13 30C6 28 1 21 1 14l3-2 0-4 4-1 2-4 4 0 4-2 4 2 4 0 2 4 4 1 0 4 3 2c0 7-5 14-12 16z" fill="#ffd48a" stroke="#d98a2b" />
    <path d="M16 29L4 13M17 29L9 6M18 29V2M19 29l8-23M20 29l12-16" stroke="#e29a3e" fill="none" />
    <path d="M21 12l2 6 6 0-4 4 2 6-6-3-6 3 2-6-4-4h6z" fill="#ef7f1d" stroke="#b9540b" />
  </svg>
);

const NotesIcon = () => (
  <svg width="26" height="30">
    <rect x="1" y="1" width="24" height="28" rx="1" fill="#f2fbff" stroke="#8ac" />
    {steps(5, 4, 6).map(y => <path key={y} d={`M3 ${y}h20`} stroke="#2a9cc4" strokeWidth="2" />)}
  </svg>
);

const RedGIcon = () => (
  <svg width="28" height="32">
    <path d="M13 4L27 1l0 6-9 1C11 11 8 17 8 22c2 4 10 3 12-1l-4 0 1-5 10-1-1 12-5 4-13 0C3 28 1 24 1 19 2 12 6 7 13 4z" fill="#d72a18" />
  </svg>
);

const FloppyIcon = () => (
  <svg width="32" height="34">
    <path d="M1 1h27l3 3v29H1z" fill="#2036c8" stroke="#101a70" />
    <rect x="8" y="1" width="15" height="12" fill="#d6dbe4" />
    <rect x="12" y="2" width="5" height="9" fill="#2036c8" />
    <rect x="4" y="16" width="24" height="16" fill="#fff" />
    <path d="M6 20h20M6 24h20M6 28h8" stroke="#d33" />
    <text x="15" y="31" fontSize="7" fontWeight="bold" fill="#111" fontFamily="Noto Sans">64-</text>
  </svg>
);

const PIcon = () => (
  <svg width="32" height="34">
    <path d="M3 32V2h13" fill="none" stroke="#12803e" strokeWidth="2" />
    <path d="M7 20V5h14c10 0 10 15 0 15l-6 1c-3 2-3 9-5 12H6c0-6 2-9 3-13z" fill="#0f9440" />
  </svg>
);

const OfficeDocIcon = ({ color, letter, sheet }) => (
  <svg width="32" height="34">
    <path d="M1 31V12C1 5 5 1 12 1h15" fill="#e9eff8" stroke={color} strokeWidth="2" />
    <rect x="10" y="5" width="20" height="26" fill="#fff" stroke={color} />
    <path d={sheet ? 'M12 22h16M12 27h16M20 8v22M25 8v22M12 17h16' : 'M20 10h8M20 14h8M20 18h8M12 23h16M12 27h16'} stroke={color} />
    <rect x="6" y="9" width="14" height="14" fill={color} />
    <text x="13" y="20" fontSize="12" fontWeight="bold" textAnchor="middle" fill="#fff" fontFamily="Liberation Sans">{letter}</text>
  </svg>
);

const DiscIcon = () => (
  <svg width="34" height="32">
    <ellipse cx="19" cy="18" rx="13" ry="10" fill="#138f8a" stroke="#062f3a" strokeWidth="2" strokeDasharray="4 1" />
    <ellipse cx="20" cy="17" rx="9" ry="6" fill="#5fd8c8" stroke="#0a6a62" />
    <ellipse cx="20" cy="17" rx="5" ry="3" fill="#138f8a" stroke="#0a4a50" />
    <circle cx="20" cy="17" r="2" fill="#ece05a" />
    <path d="M2 4l5-2 8 2-1 5-7 1-5-3z" fill="#39c8c0" stroke="#0c5356" />
    <path d="M3 15l3 8 8 5 10 1" stroke="#c9c9d0" fill="none" strokeWidth="2" strokeDasharray="3 2" />
  </svg>
);

const XIcon = () => (
  <svg width="34" height="34">
    <path d="M3 2h7l21 30h-7z" fill="#8b1a86" stroke="#fff" />
    <path d="M31 2L3 32" stroke="#fff" strokeWidth="3" />
    <path d="M31 2L3 32" stroke="#3a0b38" />
  </svg>
);

const BirdIcon = () => (
  <svg width="30" height="32">
    <rect width="30" height="32" rx="6" fill="#1c8df5" />
    <path d="M8 6c3 5 8 5 11 10l-2 4 4 0-8 9 2-7c-5-2-7-8-7-16z" fill="#fff" />
  </svg>
);

const WindowsFlag = () => (
  <svg width="24" height="22">
    <path d="M3 4c3-2 5-2 8 0l-1 7c-3-2-5-2-8 0z" fill="#e8612c" />
    <path d="M12 4c3 2 6 2 9 0l-1 7c-3 2-6 2-9 0z" fill="#85c441" />
    <path d="M2 12c3-2 5-2 8 0l-1 7c-3-2-5-2-8 0z" fill="#4aa5e8" />
    <path d="M11 12c3 2 6 2 9 0l-1 7c-3 2-6 2-9 0z" fill="#fcc73a" />
  </svg>
);

const TASKS = [
  { name: 'shell', icon: <ShellIcon /> },
  { name: 'notes', icon: <NotesIcon /> },
  { name: 'genesis', icon: <RedGIcon /> },
  { name: 'floppy', icon: <FloppyIcon /> },
  { name: 'p', icon: <PIcon /> },
  { name: 'word', icon: <OfficeDocIcon color="#2b5797" letter="W" />, active: true, stack: true },
  { name: 'excel', icon: <OfficeDocIcon color="#3c8c3f" letter="X" sheet />, stack: true },
  { name: 'disc', icon: <DiscIcon /> },
  { name: 'disc2', icon: <DiscIcon /> },
  { name: 'x', icon: <XIcon />, stack: true },
  { name: 'bird', icon: <BirdIcon /> },
];

const Tasks = () => (
  <Taskbar>
    <StartButton aria-label="开始菜单"><WindowsFlag /></StartButton>
    {TASKS.map(t => (
      <TaskButton key={t.name} aria-label={t.name} $active={t.active} $stack={t.stack}>{t.icon}</TaskButton>
    ))}
    <Tray>
      <button aria-label="微软拼音">
        <svg width="16" height="16" fontFamily="Liberation Sans" fontWeight="bold" fontSize="8">
          <rect x="0.500" y="0.500" width="15" height="15" fill="#111" stroke="#ddd" />
          <rect x="1" y="8" width="7" height="7" fill="#eee04a" />
          <rect x="8" y="8" width="7" height="7" fill="#c22" />
          <text x="1" y="7" fill="#fff">M</text><text x="9" y="7" fill="#fff">S</text>
          <text x="2" y="15" fill="#111">P</text><text x="9" y="15" fill="#ff0">Y</text>
        </svg>
      </button>
      <button aria-label="体验">
        <svg width="16" height="16" fill="#fff" fontFamily="Noto Sans CJK SC" fontSize="9">
          <text x="0" y="8">体</text><text x="7" y="15">验</text>
          <path d="M11 1h4v4M1 11v4h4" fill="none" stroke="#fff" />
        </svg>
      </button>
      <ImeButton $width={14} $after={4}>中</ImeButton>
      <ImeButton $width={10}>·,</ImeButton>
      <button aria-label="工具">
        <svg width="16" height="16"><path d="M1 8h11l-2 7H3z" fill="#f0d23c" stroke="#8a6d10" /><path d="M4 8L2 2M7 8V1" stroke="#e33" strokeWidth="2" /><circle cx="11" cy="4" r="3" fill="#ccc" stroke="#eee" /></svg>
      </button>
      <button aria-label="菜单">
        <svg width="16" height="16"><path d="M1 1h10v14H1z" fill="#fff" /><path d="M1 2h10M3 6h6M3 9h6M3 12h6" stroke="#2a3aa0" strokeWidth="2" /><path d="M10 5v9l2-2 2 3 1-1-1-3h2z" fill="#fff" stroke="#111" /></svg>
      </button>
      <HelpTray aria-label="帮助">?</HelpTray>
      <button aria-label="还原">
        <svg width="14" height="20" fill="none" stroke="#fff"><path d="M5 2.500h5v3H5zM3 4.500h5v3H3z" /><path d="M4 15h5l-2.500 3z" fill="#fff" stroke="none" /></svg>
      </button>
      <ExpandTray aria-label="显示隐藏的图标"><svg width="14" height="8"><path d="M3 6h8L7 2z" fill="#fff" /></svg></ExpandTray>
      <button aria-label="操作中心">
        <svg width="18" height="18"><path d="M3 2v14M3 3h5l2 1h5v6h-5l-2-1H3" fill="#fff" stroke="#fff" /><circle cx="12" cy="12" r="5" fill="#d32f23" /><path d="M10 10l4 4M14 10l-4 4" stroke="#fff" strokeWidth="2" /></svg>
      </button>
      <button aria-label="音量">
        <svg width="18" height="16" fill="none" stroke="#fff"><path d="M2 6h2l4-4v12l-4-4H2z" fill="#fff" /><path d="M10 6q2 2 0 4M12 4q3 4 0 8M14 2q5 6 0 12" /></svg>
      </button>
      <button aria-label="网络">
        <svg width="18" height="16" fill="none" stroke="#fff" strokeWidth="1.500"><path d="M6 4h10v8H6zM8 14h6M3 1v3M6 1v3M2 4h4v3H2zM4 7v6h3" /></svg>
      </button>
      <Clock>18:05<br />2023/9/23</Clock>
      <ShowDesktop aria-label="显示桌面" />
    </Tray>
  </Taskbar>
);

const App = () => (
  <Window>
    <GlobalStyle />
    <TitleBar>
      <TitleLeft>
        <QuickAccess>
          <QuickButton aria-label="保存"><SaveIcon /></QuickButton>
          <QuickButton aria-label="撤消"><UndoIcon /></QuickButton>
          <Caret color="#dde8f5" />
          <QuickButton aria-label="恢复"><RedoIcon /></QuickButton>
        </QuickAccess>
        <QuickButton aria-label="自定义快速访问工具栏"><CustomizeIcon /></QuickButton>
      </TitleLeft>
      <WindowTitle>2013091220440078-71 [兼容模式] - Microsoft Word</WindowTitle>
      <WindowButtons>
        <WindowButton $width={29} aria-label="最小化"><svg width="12" height="4"><rect x="0.500" y="0.500" width="11" height="3" fill="#fff" stroke="#445" /></svg></WindowButton>
        <WindowButton $width={26} aria-label="向下还原"><svg width="12" height="12" fill="#fff" stroke="#445"><rect x="3.500" y="0.500" width="8" height="8" /><rect x="0.500" y="3.500" width="8" height="8" /><rect x="3" y="6" width="3" height="3" fill="#667" stroke="none" /></svg></WindowButton>
        <WindowButton $width={48} $close aria-label="关闭"><svg width="12" height="10"><path d="M2 1l8 8M10 1L2 9" stroke="#444" strokeWidth="4" /><path d="M2 1l8 8M10 1L2 9" stroke="#fff" strokeWidth="2.500" /></svg></WindowButton>
      </WindowButtons>
    </TitleBar>
    <OfficeButton aria-label="Office 按钮"><OfficeLogo /></OfficeButton>
    <TabStrip>
      {['开始', '插入', '页面布局', '引用', '邮件', '审阅', '视图', 'Acrobat'].map((name, i) => (
        <Tab key={name} $active={i === 0}>{name}</Tab>
      ))}
      <HelpButton>?</HelpButton>
    </TabStrip>
    <Ribbon />
    <RulerRow>
      <TabStop><span>L</span></TabStop>
      <TopRuler />
      <ScrollButton $height={22} $light aria-label="查看标尺">
        <svg width="15" height="18"><path d="M1 0h12v2H1z" fill="#334d75" /><rect x="1.500" y="5.500" width="12" height="12" fill="#e5eefa" stroke="#4a6a9a" /><path d="M4 8v5h3M6 10h5v5H8z" fill="#fff" stroke="#4a6a9a" /></svg>
      </ScrollButton>
    </RulerRow>
    <WorkArea>
      <SideRuler><LeftRuler /></SideRuler>
      <Canvas>
        <Swoosh width="320" height="120">
          <path d="M0 0h316Q120 50 0 118z" fill="#c0d6f2" opacity="0.350" />
          <path d="M0 0h316Q140 36 0 95z" fill="#c5daf3" opacity="0.550" />
          <path d="M316 0Q120 50 0 118" fill="none" stroke="#b4cdec" opacity="0.800" />
        </Swoosh>
        <Document />
      </Canvas>
      <Scrollbar>
        <ScrollButton aria-label="向上滚动"><svg width="9" height="5"><path d="M0 5h9L4.500 0z" fill="#3d5a8a" /></svg></ScrollButton>
        <ScrollTrack>
          <ScrollThumb><svg width="7" height="8"><path d="M0 .5h7M0 3.500h7M0 6.500h7" stroke="#54719f" /></svg></ScrollThumb>
        </ScrollTrack>
        <ScrollButton aria-label="向下滚动"><svg width="9" height="5"><path d="M0 0h9L4.500 5z" fill="#3d5a8a" /></svg></ScrollButton>
        <ScrollButton $light aria-label="前一页"><svg width="7" height="8"><path d="M0 3h7L3.500 0zM0 7h7L3.500 4z" fill="#111" /></svg></ScrollButton>
        <ScrollButton $light aria-label="选择浏览对象"><svg width="8" height="8"><circle cx="4" cy="4" r="3" fill="#b9bdc4" stroke="#333" /></svg></ScrollButton>
        <ScrollButton $light aria-label="下一页"><svg width="7" height="8"><path d="M0 0h7L3.500 3zM0 4h7L3.500 7z" fill="#111" /></svg></ScrollButton>
      </Scrollbar>
    </WorkArea>
    <Status />
    <Tasks />
  </Window>
);

export default App;
